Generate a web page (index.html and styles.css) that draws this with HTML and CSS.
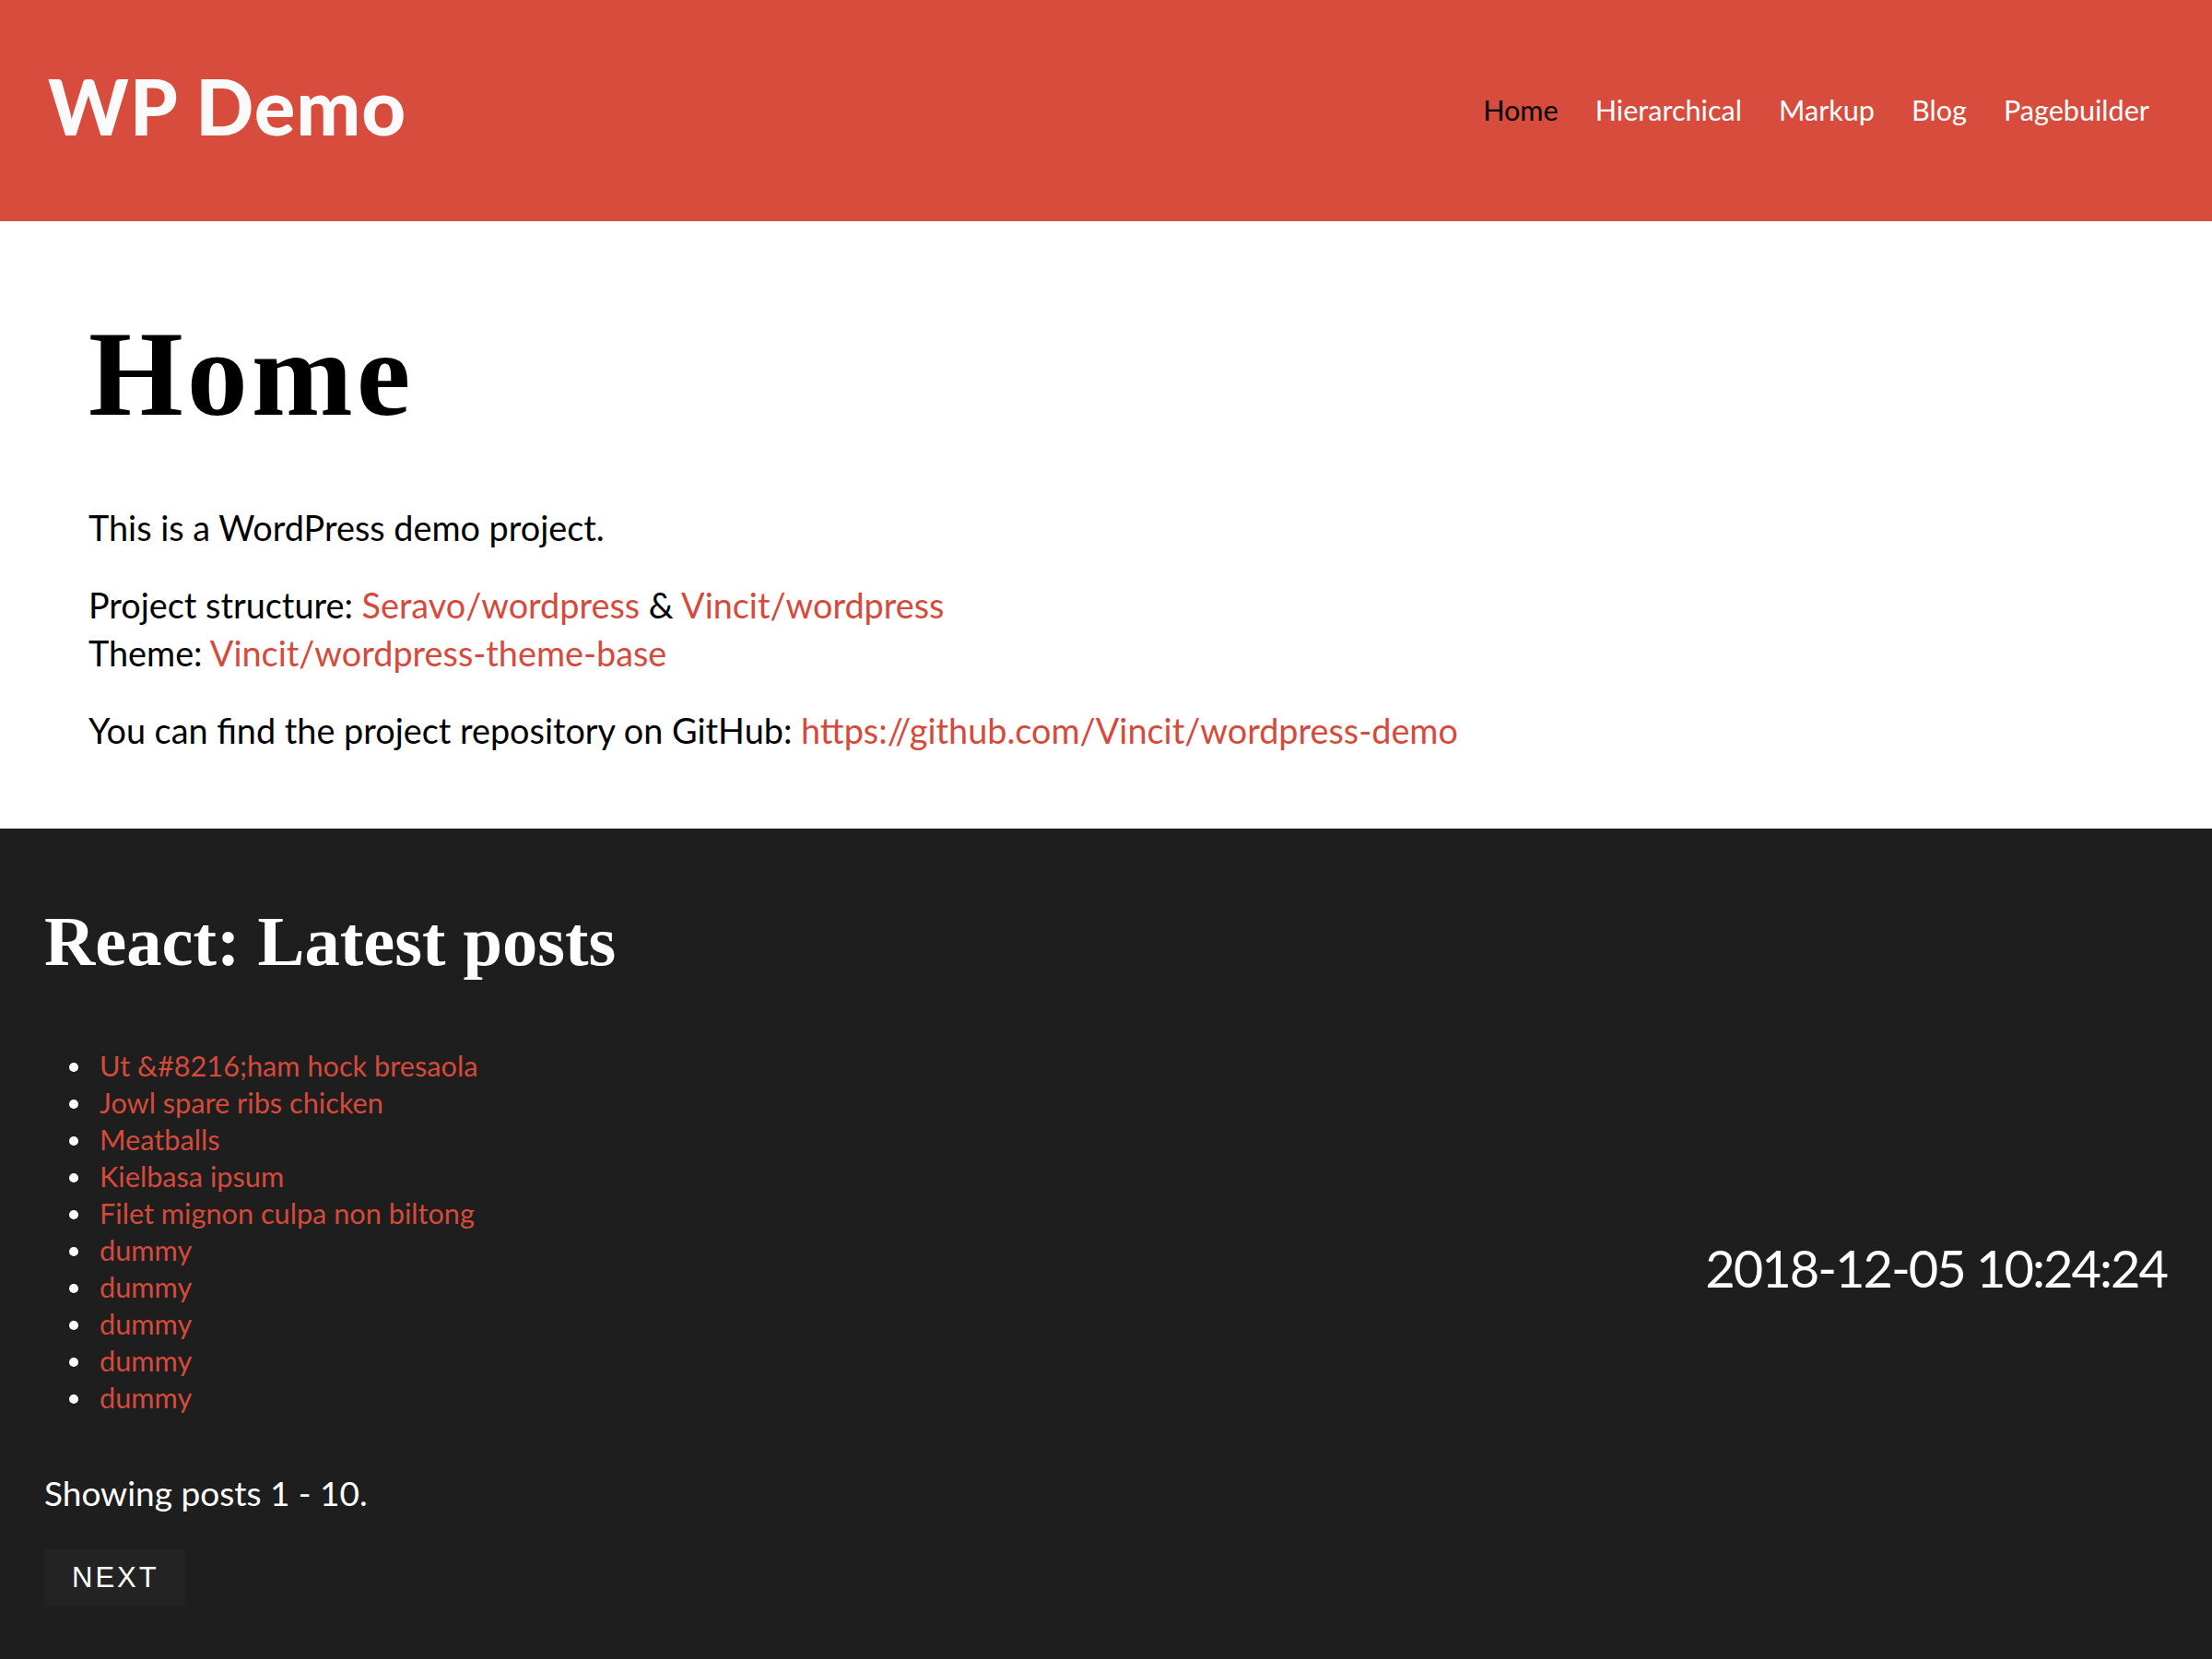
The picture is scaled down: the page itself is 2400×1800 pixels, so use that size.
FILE: index.html
```html
<!DOCTYPE html>
<html lang="en">
<head>
<meta charset="utf-8">
<title>WP Demo</title>
<link rel="stylesheet" href="styles.css">
</head>
<body>
<header class="site-header">
  <a class="logo" href="#">WP Demo</a>
  <nav class="main-nav">
    <a class="nav-link active" href="#">Home</a>
    <a class="nav-link" href="#">Hierarchical</a>
    <a class="nav-link" href="#">Markup</a>
    <a class="nav-link" href="#">Blog</a>
    <a class="nav-link" href="#">Pagebuilder</a>
  </nav>
</header>
<main class="content">
  <h1 class="page-title">Home</h1>
  <p class="para">This is a WordPress demo project.</p>
  <p class="para">Project structure: <a class="link" href="#">Seravo/wordpress</a> &amp; <a class="link" href="#">Vincit/wordpress</a><br>Theme: <a class="link" href="#">Vincit/wordpress-theme-base</a></p>
  <p class="para">You can find the project repository on GitHub: <a class="link" href="#">https://github.com/Vincit/wordpress-demo</a></p>
</main>
<section class="react">
  <div class="posts">
    <h2 class="posts-title">React: Latest posts</h2>
    <ul class="post-list">
      <li><a class="link" href="#">Ut &amp;#8216;ham hock bresaola</a></li>
      <li><a class="link" href="#">Jowl spare ribs chicken</a></li>
      <li><a class="link" href="#">Meatballs</a></li>
      <li><a class="link" href="#">Kielbasa ipsum</a></li>
      <li><a class="link" href="#">Filet mignon culpa non biltong</a></li>
      <li><a class="link" href="#">dummy</a></li>
      <li><a class="link" href="#">dummy</a></li>
      <li><a class="link" href="#">dummy</a></li>
      <li><a class="link" href="#">dummy</a></li>
      <li><a class="link" href="#">dummy</a></li>
    </ul>
    <p class="showing">Showing posts 1 - 10.</p>
    <button class="next-btn" type="button">Next</button>
  </div>
  <div class="clock">2018-12-05 10:24:24</div>
</section>
</body>
</html>
```

FILE: styles.css
```css
html, body {
  margin: 0;
  padding: 0;
}
body {
  font-family: "Source Sans Pro", Lato, "Noto Sans", sans-serif;
  color: #000;
  background: #1e1e1e;
}
a {
  text-decoration: none;
}
.site-header {
  height: 240px;
  background: #d74c3c;
  display: flex;
  align-items: center;
  justify-content: space-between;
  padding: 0 48px;
}
.logo {
  color: #fafafa;
  font-family: Lato, "Open Sans", sans-serif;
  font-weight: 900;
  font-size: 83px;
  line-height: 1;
  padding-left: 4px;
  margin-bottom: 10px;
  letter-spacing: 1px;
}
.main-nav {
  display: flex;
  align-items: center;
}
.nav-link {
  color: #fff;
  font-size: 30.6px;
  line-height: 40px;
  padding: 0 20px;
}
.nav-link.active {
  color: #000;
}
.content {
  background: #fff;
  padding: 87px 96px 80px;
}
.page-title {
  font-family: "Source Serif Pro", "Liberation Serif", serif;
  font-weight: 700;
  font-size: 132px;
  letter-spacing: 4px;
  line-height: 1.2;
  margin: 0 0 62px;
}
.para {
  font-size: 37.8px;
  line-height: 52px;
  margin: 0 0 32px;
}
.para:last-child {
  margin-bottom: 0;
}
.link {
  color: #d64a3b;
}
.react {
  display: flex;
  align-items: center;
  justify-content: space-between;
  padding: 75px 49px 100px 48px;
  color: #fff;
}
.posts-title {
  font-family: "Source Serif Pro", "Liberation Serif", serif;
  font-weight: 700;
  font-size: 76.5px;
  line-height: 96px;
  margin: 0 0 67px;
}
.post-list {
  margin: 0;
  padding-left: 54px;
  font-size: 30.7px;
  line-height: 40px;
}
.post-list li {
  padding-left: 6px;
}
.showing {
  font-size: 37px;
  line-height: 56px;
  margin: 55px 0 33px;
}
.next-btn {
  background: #232323;
  border: none;
  color: #fff;
  font-family: "Liberation Sans", Arial, sans-serif;
  font-size: 31px;
  letter-spacing: 3px;
  text-transform: uppercase;
  height: 62px;
  padding: 0 28px 0 30px;
}
.clock {
  font-size: 56px;
  letter-spacing: -2px;
  line-height: 1.2;
  margin-top: 34px;
}
```
